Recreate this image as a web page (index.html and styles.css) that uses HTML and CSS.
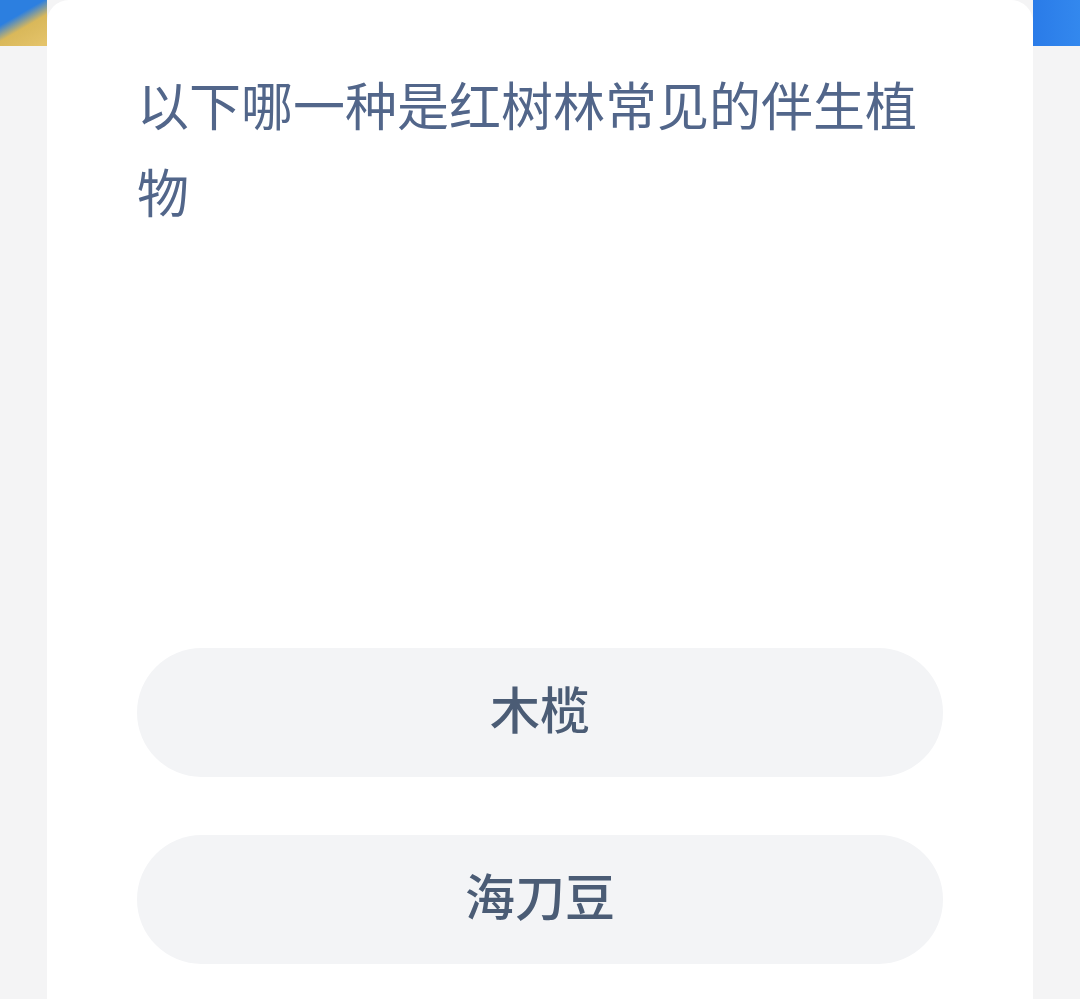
FILE: index.html
```html
<!DOCTYPE html>
<html lang="zh-CN">
<head>
    <meta charset="UTF-8">
    <title>答题</title>
    <link rel="stylesheet" href="styles.css">
</head>
<body>
<div class="page">
    <div class="card">
        <!--题目-->
        <p class="question">以下哪一种是红树林常见的伴生植物</p>

        <!--选项-->
        <ul class="options">
            <li>木榄</li>
            <li>海刀豆</li>
        </ul>
    </div>
</div>
</body>
</html>
```

FILE: styles.css
```css
*{
    margin: 0;
    padding: 0;
    list-style: none;
}
html, body{
    height: 100%;
}
body{
    background-color: #f4f4f5;
    font-family: "Noto Sans CJK SC", "Noto Sans", sans-serif;
}
.page{
    min-height: 100%;
    padding: 0 47px;
    background:
        linear-gradient(150deg, #2c7fe0 0, #2c7fe0 22px, #d9b85a 36px, #e4c36a 60px) left top / 47px 46px no-repeat,
        linear-gradient(90deg, #2a7be8, #3388ee) right top / 47px 46px no-repeat,
        #f4f4f5;
}
.card{
    background-color: #fff;
    border-radius: 22px 22px 0 0;
    padding: 60px 90px 0;
    min-height: 999px;
    box-sizing: border-box;
}
.question{
    font-size: 52px;
    line-height: 87px;
    color: #52668a;
    height: 588px;
}
.options{
    display: flex;
    flex-direction: column;
    gap: 58px;
}
.options li{
    height: 129px;
    padding-bottom: 12px;
    box-sizing: border-box;
    border-radius: 65px;
    background-color: #f3f4f6;
    display: flex;
    align-items: center;
    justify-content: center;
    font-size: 50px;
    font-weight: 500;
    color: #4b5c75;
}
```
